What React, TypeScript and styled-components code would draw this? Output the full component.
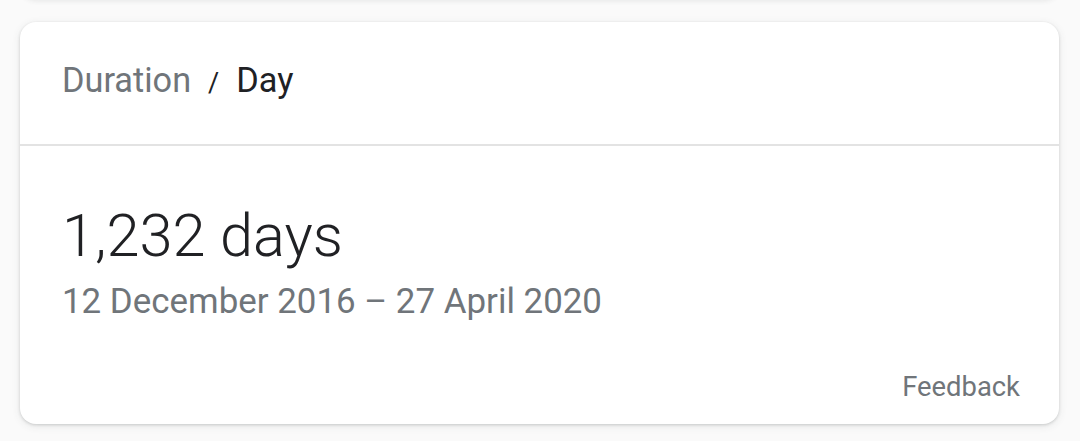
import React from "react";
import styled, { createGlobalStyle } from "styled-components";

const Global = createGlobalStyle`
  html, body {
    margin: 0;
    padding: 0;
    background: #ffffff;
  }
  body {
    font-family: Roboto, "Noto Sans", Arial, sans-serif;
    -webkit-font-smoothing: antialiased;
  }
`;

const Page = styled.div`
  width: 1080px;
  height: 441px;
  overflow: hidden;
  background: #fafafa;
  display: flex;
  flex-direction: column;
`;

const PrevCardEdge = styled.div`
  margin: -20px 20px 0;
  height: 20px;
  border-radius: 0 0 16px 16px;
  background: #ffffff;
  box-shadow: 0 1px 5px rgba(60, 64, 67, 0.1);
`;

const Card = styled.div`
  margin: 22px 21px 0 20px;
  height: 402px;
  background: #ffffff;
  border-radius: 16px;
  box-shadow: 0 1px 3px rgba(60, 64, 67, 0.2), 0 2px 8px rgba(60, 64, 67, 0.1);
  display: flex;
  flex-direction: column;
`;

const Header = styled.div`
  height: 124px;
  box-sizing: border-box;
  padding: 38px 0 0 42px;
  border-bottom: 2px solid #e3e3e3;
  display: flex;
  align-items: baseline;
  gap: 17px;
  font-size: 34.3px;
`;

const Crumb = styled.span<{ $current?: boolean }>`
  color: ${(p) => (p.$current ? "#202124" : "#70757a")};
`;

const Slash = styled.span`
  color: #202124;
  font-size: 27px;
`;

const Body = styled.div`
  flex: 1;
  display: flex;
  flex-direction: column;
  padding: 54px 39px 0 42px;
`;

const Total = styled.div`
  font-size: 59.5px;
  font-weight: 300;
  color: #202124;
  line-height: 72px;
`;

const Range = styled.div`
  font-size: 34.9px;
  color: #70757a;
  line-height: 46px;
  margin-top: 7px;
`;

const Footer = styled.div`
  margin-top: auto;
  margin-bottom: 21px;
  align-self: flex-end;
  font-size: 27.4px;
  color: #70757a;
`;

export default function App() {
  return (
    <>
      <Global />
      <Page>
        <PrevCardEdge />
        <Card>
          <Header>
            <Crumb>Duration</Crumb>
            <Slash>/</Slash>
            <Crumb $current>Day</Crumb>
          </Header>
          <Body>
            <Total>1,232 days</Total>
            <Range>12 December 2016 – 27 April 2020</Range>
            <Footer>Feedback</Footer>
          </Body>
        </Card>
      </Page>
    </>
  );
}
